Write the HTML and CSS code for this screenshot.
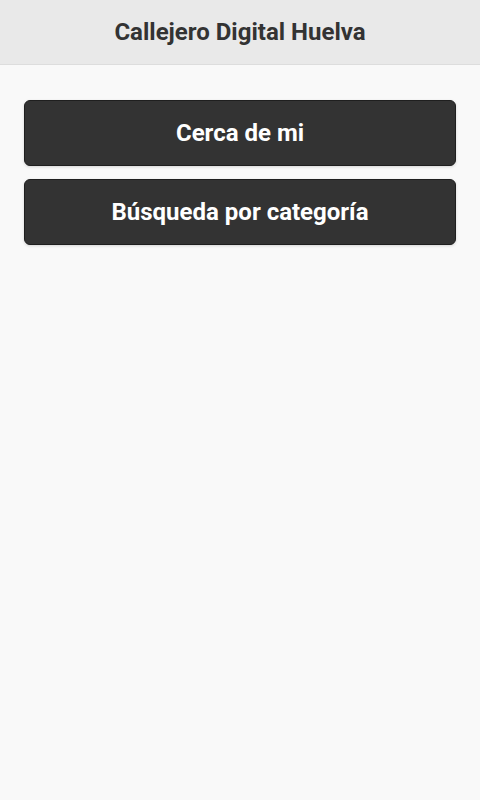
FILE: index.html
```html
<!DOCTYPE html>
<html lang="es">
<head>
    <meta charset="UTF-8">
    <title>Callejero Digital Huelva</title>
    <link rel="stylesheet" href="styles.css">
</head>
<body>
<div class="page">
    <div class="header">
        <h1>Callejero Digital Huelva</h1>
    </div>
    <div class="content">
        <a href="#" class="btn">Cerca de mi</a>
        <a href="#" class="btn">Búsqueda por categoría</a>
    </div>
</div>
</body>
</html>
```

FILE: styles.css
```css
html, body { margin: 0; padding: 0; height: 100%; }
body { font-family: Roboto, "Liberation Sans", sans-serif; background-color: #f9f9f9; color: #333; }
.page { min-height: 100%; }
.header {
    height: 64px;
    background-color: #e9e9e9;
    border-bottom: 1px solid #dddddd;
    display: flex;
    align-items: center;
    justify-content: center;
}
.header h1 { margin: 0; font-size: 24px; font-weight: bold; color: #333; }
.content { padding: 35px 24px; display: flex; flex-direction: column; gap: 13px; }
.btn {
    box-sizing: border-box;
    display: flex;
    align-items: center;
    justify-content: center;
    height: 66px;
    background-color: #333;
    border: 1px solid #1f1f1f;
    border-radius: 6px;
    box-shadow: 0 1px 3px rgba(0, 0, 0, 0.15);
    color: #fff;
    font-size: 24px;
    font-weight: bold;
    text-decoration: none;
}
```
